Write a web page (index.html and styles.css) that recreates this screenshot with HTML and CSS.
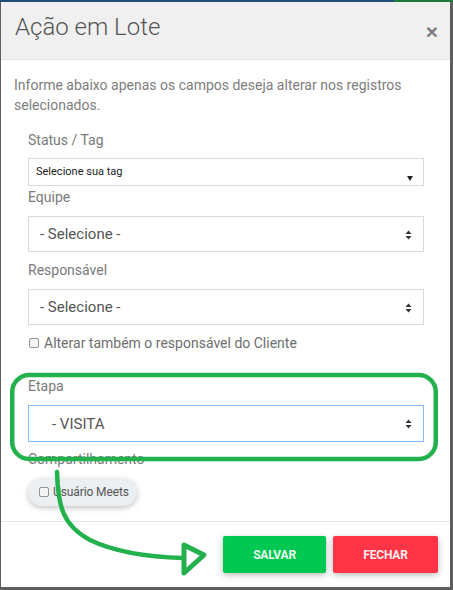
FILE: index.html
```html
<!DOCTYPE html>
<html lang="pt-BR">
<head>
<meta charset="utf-8">
<title>Ação em Lote</title>
<link rel="stylesheet" href="styles.css">
</head>
<body>
<div class="topstrip"></div>
<div class="modal">
  <div class="modal-header">
    <h4 class="modal-title">Ação em Lote</h4>
    <span class="close">×</span>
  </div>
  <div class="modal-body">
    <p class="intro">Informe abaixo apenas os campos deseja alterar nos registros selecionados.</p>
    <div class="fields">
      <div class="lbl lbl-tag">Status / Tag</div>
      <div class="select select-tag">
        <span class="tag-text">Selecione sua tag</span>
        <span class="caret-down"></span>
      </div>
      <div class="lbl lbl-equipe">Equipe</div>
      <div class="select">
        <span>- Selecione -</span>
        <svg class="updown" width="7" height="10" viewBox="0 0 7 10"><path d="M0.5 4 L3.5 0.5 L6.5 4 Z M0.5 6 L6.5 6 L3.5 9.5 Z" fill="#333"/></svg>
      </div>
      <div class="lbl">Responsável</div>
      <div class="select">
        <span>- Selecione -</span>
        <svg class="updown" width="7" height="10" viewBox="0 0 7 10"><path d="M0.5 4 L3.5 0.5 L6.5 4 Z M0.5 6 L6.5 6 L3.5 9.5 Z" fill="#333"/></svg>
      </div>
      <div class="check-row">
        <span class="checkbox"></span>
        <span>Alterar também o responsável do Cliente</span>
      </div>
      <div class="lbl">Etapa</div>
      <div class="select select-focus">
        <span class="indent">- VISITA</span>
        <svg class="updown" width="7" height="10" viewBox="0 0 7 10"><path d="M0.5 4 L3.5 0.5 L6.5 4 Z M0.5 6 L6.5 6 L3.5 9.5 Z" fill="#333"/></svg>
      </div>
      <div class="lbl lbl-share">Compartilhamento</div>
      <div class="chip-row">
        <div class="chip">
          <span class="checkbox"></span>
          <span class="chip-text">Usuário Meets</span>
        </div>
      </div>
    </div>
  </div>
  <div class="modal-footer">
    <button class="btn btn-success">SALVAR</button>
    <button class="btn btn-danger">FECHAR</button>
  </div>
</div>
<svg class="annot" width="453" height="590" viewBox="0 0 453 590">
  <rect x="12.2" y="375" width="423.6" height="84" rx="17" ry="17" fill="none" stroke="#22b14c" stroke-width="4.5"/>
  <path d="M57,472 C58,505 62,525 90,540 C115,552 145,557 183,558" fill="none" stroke="#22b14c" stroke-width="4.5" stroke-linecap="round"/>
  <path d="M184,545 L184,573 L204,555 Z" fill="none" stroke="#22b14c" stroke-width="5" stroke-linejoin="round"/>
</svg>
</body>
</html>
```
FILE: styles.css
```css
* { box-sizing: border-box; }
html, body {
  margin: 0;
  padding: 0;
}
body {
  width: 453px;
  height: 590px;
  overflow: hidden;
  position: relative;
  background: #5e5e5e;
  font-family: Roboto, "Liberation Sans", sans-serif;
}
.topstrip {
  height: 2px;
  background: linear-gradient(to right, #1e4d78 0, #1e4d78 394px, #1d7a3c 394px, #1d7a3c 453px);
}
.modal {
  margin-left: 1px;
  width: 449px;
  background: #fff;
}
.modal-header {
  display: flex;
  justify-content: space-between;
  align-items: flex-start;
  background: #f0f0f0;
  padding: 13px 12px 20px 14px;
  border-bottom: 1px solid #e6e6e6;
  height: 58px;
}
.modal-title {
  margin: 0;
  font-weight: 300;
  font-size: 24px;
  line-height: 24px;
  color: #555;
}
.close {
  font-family: "Liberation Sans", Arial, sans-serif;
  font-weight: 700;
  font-size: 21px;
  line-height: 21px;
  color: #7c7c7c;
  margin-top: 6px;
}
.modal-body {
  padding: 15px 13px 15px 13px;
}
.intro {
  margin: 0 0 15px 0;
  font-size: 14px;
  line-height: 20px;
  color: #7d7d7d;
}
.fields {
  margin: 0 13px 0 14px;
  display: flex;
  flex-direction: column;
}
.lbl {
  font-size: 14px;
  line-height: 20px;
  color: #7a7a7a;
  margin-bottom: 9px;
}
.lbl-tag { margin-bottom: 8px; }
.lbl-share { margin-bottom: 9px; }
.select {
  height: 36px;
  border: 1px solid #dadada;
  display: flex;
  align-items: center;
  justify-content: space-between;
  padding: 0 11px 0 11px;
  font-size: 15px;
  color: #555;
  margin-bottom: 8px;
  background: #fff;
}
.select-tag {
  height: 28px;
  align-items: stretch;
  padding: 0 10px 0 7px;
  margin-bottom: 1px;
}
.tag-text {
  font-size: 11px;
  line-height: 16px;
  padding-top: 5px;
  color: #222;
}
.caret-down {
  align-self: flex-end;
  margin-bottom: 4px;
  width: 0;
  height: 0;
  border-left: 3.5px solid transparent;
  border-right: 3.5px solid transparent;
  border-top: 5px solid #222;
}
.updown { display: block; margin-top: 1px; }
.select-focus {
  height: 37px;
  border-color: #80bdff;
  margin-bottom: 7px;
}
.indent { padding-left: 12px; }
.check-row {
  display: flex;
  align-items: center;
  gap: 5px;
  font-size: 14px;
  line-height: 20px;
  height: 20px;
  color: #6e6e6e;
  margin-bottom: 23px;
}
.checkbox {
  display: inline-block;
  width: 10px;
  height: 10px;
  border: 1px solid #959595;
  border-radius: 2px;
  background: #f4f4f4;
  flex: none;
}
.check-row .checkbox { margin-left: 1px; }
.chip-row { display: flex; }
.chip {
  display: flex;
  align-items: center;
  gap: 4px;
  height: 28px;
  padding: 0 8px 0 11px;
  border-radius: 14px;
  background: #eceff1;
  box-shadow: 0 2px 5px rgba(0,0,0,0.16), 0 2px 8px rgba(0,0,0,0.08);
  white-space: nowrap;
}
.chip-text {
  font-size: 12px;
  color: #555;
  white-space: nowrap;
  letter-spacing: -0.1px;
}
.modal-footer {
  border-top: 1px solid #e6e6e6;
  padding: 14px 12px 14px 0;
  display: flex;
  justify-content: flex-end;
  gap: 7px;
}
.btn {
  height: 37px;
  border: none;
  border-radius: 2px;
  font-family: Roboto, "Liberation Sans", sans-serif;
  font-weight: 700;
  font-size: 12px;
  letter-spacing: -0.2px;
  color: rgba(255,255,255,0.93);
  box-shadow: 0 2px 5px rgba(0,0,0,0.16), 0 2px 10px rgba(0,0,0,0.12);
  padding: 0;
}
.btn-success { background: #00c851; width: 103px; }
.btn-danger { background: #ff3547; width: 105px; }
.annot {
  position: absolute;
  top: 0;
  left: 0;
  pointer-events: none;
}
```
